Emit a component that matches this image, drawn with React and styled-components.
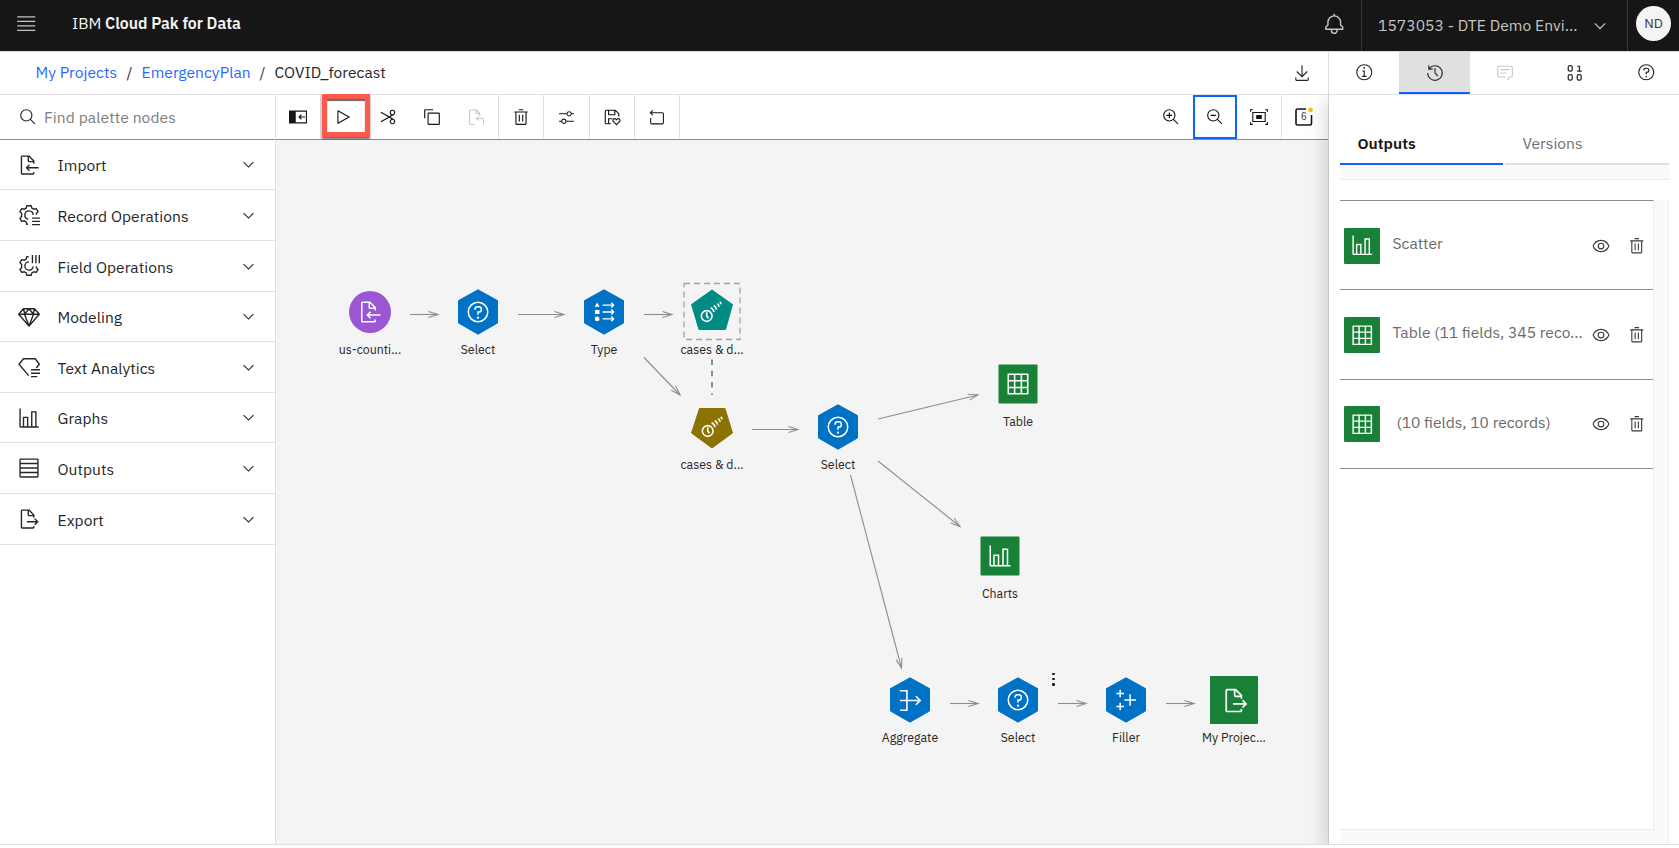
import React from "react";
import styled, { createGlobalStyle, css } from "styled-components";

const GlobalStyle = createGlobalStyle`
  *, *::before, *::after { box-sizing: border-box; }
  body {
    margin: 0;
    background: #fff;
    color: #262626;
    font-family: "IBM Plex Sans", Roboto, "Liberation Sans", sans-serif;
    font-size: 15.6px;
    overflow: hidden;
  }
`;

/* ---------- icons ---------- */

const Svg = styled.svg`
  display: block;
  flex: none;
  fill: currentColor;
  overflow: visible;
`;

const line = { fill: "none", stroke: "currentColor", strokeWidth: 2 };
const filePath =
  "M24 14V10a1 1 0 0 0-.29-.71l-7-7A1 1 0 0 0 16 2H6A2 2 0 0 0 4 4V28a2 2 0 0 0 2 2H22a2 2 0 0 0 2-2V26H22v2H6V4h8v6a2 2 0 0 0 2 2h6v2zm-8-4V4.41L21.59 10z";
const lensPath =
  "M21.45 20A10.86 10.86 0 0 0 24 13 11 11 0 1 0 13 24a10.86 10.86 0 0 0 7-2.55L27.59 29 29 27.59ZM13 22a9 9 0 1 1 9-9A9 9 0 0 1 13 22Z";
const ringPath =
  "M16 2A14 14 0 1 0 30 16 14 14 0 0 0 16 2Zm0 26A12 12 0 1 1 28 16 12 12 0 0 1 16 28Z";

const shapes = {
  menu: <path d="M2 5h28v2H2zM2 12h28v2H2zM2 19h28v2H2zM2 26h28v2H2z" />,
  bell: (
    <path d="M28.7 19.3 26 16.59V13a10 10 0 0 0-9-9.95V1H15V3.05A10 10 0 0 0 6 13v3.59L3.3 19.3A1 1 0 0 0 3 20v3a1 1 0 0 0 1 1h7v.78a5.15 5.15 0 0 0 4.5 5.2A5 5 0 0 0 21 25V24h7a1 1 0 0 0 1-1V20A1 1 0 0 0 28.7 19.3ZM19 25a3 3 0 0 1-6 0V24h6Zm8-3H5V20.41L7.7 17.7A1 1 0 0 0 8 17V13a8 8 0 0 1 16 0v4a1 1 0 0 0 .3.7L27 20.41Z" />
  ),
  chevron: <path d="M16 22 6 12 7.4 10.6 16 19.2 24.6 10.6 26 12z" />,
  download: (
    <path d="M26 24v4H6V24H4v4a2 2 0 0 0 2 2H26a2 2 0 0 0 2-2V24ZM26 14 24.59 12.59 17 20.17 17 2 15 2 15 20.17 7.41 12.59 6 14 16 24z" />
  ),
  search: <path d={lensPath} />,
  zoomIn: <path d={lensPath + "M18 12h-4V8h-2v4H8v2h4v4h2v-4h4z"} />,
  zoomOut: <path d={lensPath + "M8 12h10v2H8z"} />,
  info: (
    <path d={ringPath + "M17 22V13h-4v2h2v7h-3v2h8v-2zM16 7a1.5 1.5 0 1 0 1.5 1.5A1.5 1.5 0 0 0 16 7z"} />
  ),
  history: (
    <path d="M20.59 22 15 16.41V7h2v8.58L22 20.59zM16 2A13.94 13.94 0 0 0 6 6.23V2H4v8h8V8H7.08A12 12 0 1 1 4 16H2A14 14 0 1 0 16 2Z" />
  ),
  comment: (
    <g {...line}>
      <path d="M20 29l4-6h3a2 2 0 0 0 2-2V6a2 2 0 0 0-2-2H5a2 2 0 0 0-2 2v15a2 2 0 0 0 2 2h12" />
      <path d="M8 10h16M8 16h10" />
    </g>
  ),
  binary: (
    <g {...line} strokeWidth="2.2">
      <rect x="4" y="3" width="7" height="9.5" rx="2.5" />
      <rect x="4" y="19" width="7" height="9.5" rx="2.5" />
      <rect x="20" y="19" width="7" height="9.5" rx="2.5" />
      <path d="M20 4h4v8.5M19.5 12.5h8.5" />
    </g>
  ),
  help: (
    <>
      <path d={ringPath + "M17 8h-1.5A4.49 4.49 0 0 0 11 12.5V13h2v-.5A2.5 2.5 0 0 1 15.5 10H17a2.5 2.5 0 0 1 0 5H15v4.5h2V17a4.5 4.5 0 0 0 0-9Z"} />
      <circle cx="16" cy="23.5" r="1.5" />
    </>
  ),
  panel: (
    <>
      <path d="M0 4.5h32v23H0zM12 6.5v19h18v-19z" fillRule="evenodd" />
      <path d="M28.5 16H18M22 12l-4 4 4 4" {...line} />
    </>
  ),
  play: (
    <path d="M7 28a1 1 0 0 1-1-1V5a1 1 0 0 1 1.48-.88l20 11a1 1 0 0 1 0 1.75l-20 11A1 1 0 0 1 7 28ZM8 6.69V25.31L24.92 16Z" />
  ),
  cut: (
    <path d="M26.5 19.63 20.24 16l6.26-3.63a5 5 0 0 0-1.21-9.2A5.19 5.19 0 0 0 24 3a5 5 0 0 0-4.33 7.53 5 5 0 0 0 2.39 2.1l-3.82 2.21L4 6.6 3 8.34 16.24 16 3 23.68l1 1.74 14.24-8.26 3.82 2.21a5 5 0 0 0-2.39 2.1A5 5 0 0 0 24 29a5.19 5.19 0 0 0 1.29-.17 5 5 0 0 0 1.21-9.2ZM21.4 9.53a3 3 0 0 1 1.1-4.12 3 3 0 0 1 4.1 1.11 3 3 0 0 1-1.1 4.11A3 3 0 0 1 21.4 9.53Zm5.2 16a3 3 0 0 1-4.1 1.11 3 3 0 0 1-1.1-4.12 3 3 0 0 1 4.1-1.1A3 3 0 0 1 26.6 25.48Z" />
  ),
  copy: (
    <path d="M28 10V28H10V10H28m0-2H10a2 2 0 0 0-2 2V28a2 2 0 0 0 2 2H28a2 2 0 0 0 2-2V10a2 2 0 0 0-2-2ZM4 18H2V4A2 2 0 0 1 4 2H18V4H4Z" />
  ),
  paste: (
    <g {...line}>
      <path d="M12 29H5a2 2 0 0 1-2-2V4a2 2 0 0 1 2-2h11l6 6v5" />
      <path d="M15 2v7h7M20 14l-4 4 4 4M16 18h10a3 3 0 0 1 3 3v8" />
    </g>
  ),
  trash: (
    <path d="M12 12h2v12h-2zM18 12h2v12h-2zM4 6V8H6V28a2 2 0 0 0 2 2H24a2 2 0 0 0 2-2V8h2V6zM8 28V8H24V28zM12 2h8v2h-8z" />
  ),
  sliders: (
    <path d="M30 8h-4.1c-.5-2.3-2.5-4-4.9-4s-4.4 1.7-4.9 4H2v2h14.1c.5 2.3 2.5 4 4.9 4s4.4-1.7 4.9-4H30V8ZM21 12c-1.7 0-3-1.3-3-3s1.3-3 3-3 3 1.3 3 3S22.7 12 21 12ZM2 24h4.1c.5 2.3 2.5 4 4.9 4s4.4-1.7 4.9-4H30v-2H15.9c-.5-2.3-2.5-4-4.9-4s-4.4 1.7-4.9 4H2v2Zm9-4c1.7 0 3 1.3 3 3s-1.3 3-3 3-3-1.3-3-3 1.3-3 3-3Z" />
  ),
  save: (
    <g {...line}>
      <path d="M14 28H6a2 2 0 0 1-2-2V6a2 2 0 0 1 2-2h16l6 6v5M10 4v8h11V4M10 28v-9h7" />
      <path d="M24 29.5l-5.7-5.7a3 3 0 0 1 4.2-4.2l1.5 1.4 1.5-1.4a3 3 0 0 1 4.2 4.2z" />
    </g>
  ),
  undo: <path d="M9 2.5 4.5 7l4.5 4.5M4.5 7H27a2 2 0 0 1 2 2V26a2 2 0 0 1-2 2H7a2 2 0 0 1-2-2v-9" {...line} />,
  fit: (
    <>
      <path d="M5 8h22v16H5z" {...line} />
      <path d="M11 12.5h10v7H11z" />
      <path d="M1 6.5V3h4M27 3h4v3.5M31 25.5V29h-4M5 29H1v-3.5" {...line} />
    </>
  ),
  eye: (
    <path d="M30.94 15.66A16.69 16.69 0 0 0 16 5 16.69 16.69 0 0 0 1.06 15.66a1 1 0 0 0 0 .68A16.69 16.69 0 0 0 16 27 16.69 16.69 0 0 0 30.94 16.34a1 1 0 0 0 0-.68ZM16 25c-5.3 0-10.9-3.93-12.93-9C5.1 10.93 10.7 7 16 7s10.9 3.93 12.93 9C26.9 21.07 21.3 25 16 25ZM16 10a6 6 0 1 0 6 6 6 6 0 0 0-6-6Zm0 10a4 4 0 1 1 4-4 4 4 0 0 1-4 4Z" />
  ),
  import: <path d={filePath + "M30 19H14.83l2.58-2.59L16 15l-5 5 5 5 1.41-1.41L14.83 21H30z"} />,
  export: <path d={filePath + "M13 21h13.17l-2.58 2.59L25 25l5-5-5-5-1.41 1.41L26.17 19H13z"} />,
  record: (
    <g {...line} strokeLinejoin="round">
      <path d="M14.5 29.5h-1.7l-1-3.7-2.7-1.4-3.6 1-2.7-4.4 2.5-2.9v-4.2L2.8 11l2.7-4.4 3.6 1 2.7-1.5 1-3.6h6.4l1 3.6 2.7 1.5 3.6-1L29.2 11l-2.5 2.9v1.6" />
      <path d="M15 22a6 6 0 1 1 7-6" />
      <path d="M20.5 20.5H32M20.5 25.3H32M20.5 30H32" />
    </g>
  ),
  field: (
    <g {...line} strokeLinejoin="round">
      <path d="M15.5 2.5h-2.7l-1 3.6-2.7 1.5-3.6-1L2.8 11l2.5 2.9v4.2L2.8 21l2.7 4.4 3.6-1 2.7 1.4 1 3.7h6.4l1-3.7 2.7-1.4 3.6 1 2.7-4.4-2.5-2.9v-1.6" />
      <path d="M16 10a6 6 0 1 0 6 6.5" />
      <path d="M21 0v12M26 0v12M31 0v12" />
    </g>
  ),
  diamond: (
    <path
      d="M8 4h16l7 8-15 17L1 12zM1 12h30M16 29 9.5 12 16 4l6.5 8zM8 4l2 8M24 4l-2 8"
      {...line}
      strokeLinejoin="round"
    />
  ),
  textDiamond: (
    <g {...line} strokeLinejoin="round">
      <path d="M15.5 28.5 1.5 12l6.5-8h17l6 8-4.5 5.5" />
      <path d="M19 20h13M19 25h13M19 30h9" />
    </g>
  ),
  bars: <path d="M27 28V6H19V28H15V14H7V28H4V2H2V28a2 2 0 0 0 2 2H30V28ZM13 28H9V16h4Zm12 0H21V8h4Z" />,
  rows: <path d="M4 3h24a1 1 0 0 1 1 1v24a1 1 0 0 1-1 1H4a1 1 0 0 1-1-1V4a1 1 0 0 1 1-1zM3 9.5h26M3 16h26M3 22.5h26" {...line} />,
  grid: <path d="M3 3h26v26H3zM3 11.5h26M3 20.5h26M11.5 3v26M20.5 3v26" {...line} strokeLinejoin="round" />,
  type: (
    <>
      <path d="M6 2l3.5 6.5h-7zM3 13h6.5v6H3z" />
      <circle cx="6" cy="26" r="3.5" />
      <path d="M14 6h16M26.5 2.5 30 6l-3.5 3.5M14 16h16M26.5 12.5 30 16l-3.5 3.5M14 26h16M26.5 22.5 30 26l-3.5 3.5" {...line} />
    </>
  ),
  forecast: (
    <g {...line} strokeWidth="2.3">
      <circle cx="8.3" cy="21.8" r="7.8" />
      <path d="M8.3 16.5v5.5l2.7 3.2" />
      <path d="M14 9.7q4.2 1.8 5 6.5M18.6 6.5q3.5 1.8 4 6M23.4 3.8q2.5 1.3 3 4.8M27.2 1.5q1.8 1 2 3.2" />
    </g>
  ),
  aggregate: <path d="M1.5 2.5H11v27H1.5M1.5 16h28M23.5 10l6 6-6 6" {...line} strokeWidth="2.2" />,
  filler: <path d="M7.5 1v11M2 6.5h11M7.5 20v11M2 25.5h11M22 7.5v17M13.5 16h17" {...line} strokeWidth="2.2" />,
};

const Icon = ({ name, size = 20 }) => (
  <Svg width={size} height={size} viewBox="0 0 32 32" aria-hidden="true">
    {shapes[name]}
  </Svg>
);

/* ---------- header ---------- */

const Page = styled.div`
  display: flex;
  flex-direction: column;
  width: 1679px;
  height: 848px;
  background: #fff;
`;

const Header = styled.header`
  display: flex;
  align-items: stretch;
  flex: none;
  height: 51px;
  background: #161616;
  color: #c6c6c6;
`;

const HeaderCell = styled.div`
  display: flex;
  align-items: center;
  width: ${(p) => p.$w}px;
  padding: ${(p) => p.$pad || "0"};
  justify-content: ${(p) => p.$justify || "flex-start"};
  ${(p) => p.$divided && css`border-left: 1px solid #393939;`}
`;

const Brand = styled.div`
  flex: 1;
  padding: 13px 0 0 20px;
  line-height: 20px;
  font-size: 15.75px;
  color: #f4f4f4;
  strong { font-weight: 600; }
`;

const Account = styled.span`
  flex: 1;
  padding-bottom: 1px;
  white-space: nowrap;
  letter-spacing: 0.06px;
`;

const Avatar = styled.div`
  display: flex;
  align-items: center;
  justify-content: center;
  width: 35px;
  height: 35px;
  padding-bottom: 1px;
  border-radius: 50%;
  background: #f4f4f4;
  color: #393939;
  font-size: 13.5px;
`;

/* ---------- body frame ---------- */

const Body = styled.div`
  display: flex;
  flex: none;
  height: 794px;
  border-top: 1px solid #dcdcdc;
  border-bottom: 1px solid #e0e0e4;
`;

const Main = styled.main`
  display: flex;
  flex-direction: column;
  width: 1328px;
`;

const Crumbs = styled.nav`
  display: flex;
  align-items: center;
  height: 43px;
  padding: 0 17px 0 35.5px;
  border-bottom: 1px solid #e0e0e0;
`;

const Crumb = styled.span`
  white-space: nowrap;
  width: ${(p) => p.$w}px;
  padding-bottom: 2px;
  letter-spacing: 0.04px;
  color: ${(p) => (p.$link ? "#1f6bff" : "#262626")};
`;

const Slash = styled.span`
  width: 24px;
  padding: 0 0 2px 9px;
  color: #393939;
`;

const Push = styled.div`
  margin-left: auto;
`;

const Work = styled.div`
  display: flex;
  flex: 1;
  min-height: 0;
`;

/* ---------- palette ---------- */

const Palette = styled.aside`
  width: 276px;
  border-right: 1px solid #e0e0e0;
`;

const SearchBox = styled.div`
  display: flex;
  align-items: center;
  gap: 7px;
  height: 45px;
  padding-left: 19px;
  border-bottom: 1px solid #8d8d8d;
  color: #262626;
  span {
    padding-bottom: 1px;
    color: #7c7c7c;
    letter-spacing: 0.1px;
  }
`;

const Category = styled.div`
  display: flex;
  align-items: center;
  height: ${(p) => p.$h}px;
  padding: 0 18px 0 18px;
  border-bottom: 1px solid #e0e0e0;
`;

const CategoryName = styled.span`
  flex: 1;
  padding: 1px 0 0 17.5px;
  letter-spacing: 0.04px;
`;

/* ---------- toolbar ---------- */

const Stage = styled.section`
  display: flex;
  flex-direction: column;
  flex: 1;
`;

const Toolbar = styled.div`
  display: flex;
  flex: none;
  height: 45px;
  border-bottom: 1px solid #8d8d8d;
`;

const Tool = styled.button`
  position: relative;
  display: flex;
  align-items: center;
  justify-content: center;
  width: ${(p) => p.$w || 45}px;
  height: 44px;
  padding: 0 ${(p) => p.$nudge || 0}px 0 0;
  border: 0;
  background: none;
  color: ${(p) => (p.$off ? "#c6c6c6" : "#161616")};
  ${(p) => p.$divider && css`border-right: 1px solid #e0e0e0;`}
  ${(p) => p.$focus && css`outline: 2px solid #0f62fe; outline-offset: -2px;`}
`;

const Callout = styled.span`
  position: absolute;
  left: 1px;
  top: -1px;
  width: 48px;
  height: 43px;
  border: 5px solid #ff5a4d;
  box-shadow: 0 2px 2px rgba(0, 0, 0, 0.6), inset 0 2px 1px rgba(0, 0, 0, 0.6);
`;

/* ---------- canvas ---------- */

const Canvas = styled.div`
  position: relative;
  flex: 1;
  background: #f4f4f4;
`;

const Links = styled.svg`
  position: absolute;
  left: 0;
  top: 0;
  fill: none;
  stroke: #8d8d8d;
  stroke-width: 1.1;
`;

const NodeBox = styled.div`
  position: absolute;
  left: ${(p) => p.$x - 276 - 50}px;
  top: ${(p) => p.$y - 140 - 28}px;
  width: 100px;
  text-align: center;
`;

const Glyph = styled.div`
  display: grid;
  place-items: center;
  height: 56px;
  color: #fff;
  > * { grid-area: 1 / 1; }
`;

const NodeIcon = styled.div`
  transform: translateX(${(p) => p.$dx || 0}px);
`;

const NodeName = styled.div`
  margin-top: 1px;
  line-height: 16px;
  font-size: 12.35px;
  white-space: nowrap;
`;

const More = styled.div`
  position: absolute;
  left: 776px;
  top: 532.5px;
  display: flex;
  flex-direction: column;
  gap: 2.7px;
  i { width: 2.6px; height: 2.6px; border-radius: 50%; background: #161616; }
`;

const outlines = {
  circle: <circle cx="28" cy="28" r="21" fill="#9b56d4" />,
  hexagon: <path d="M28 5.8 47.5 16.6V39L28 50.2 8.5 39V16.6z" fill="#0072c6" stroke="#0072c6" strokeLinejoin="round" />,
  pentagon: (
    <>
      <rect x="0" y="-0.5" width="56" height="56" fill="none" stroke="#a4a4a4" strokeWidth="1.3" strokeDasharray="6 4" />
      <path d="M28 6 48.5 20.5 41.5 45.5H15L7.5 20.5z" fill="#008c84" stroke="#008c84" strokeLinejoin="round" />
    </>
  ),
  nugget: <path d="M15.500 9.5H41L48.5 34 28 49 7.5 34z" fill="#8c7200" stroke="#8c7200" strokeLinejoin="round" />,
  square: <rect x="8.5" y="8.5" width="39" height="39" rx="1" fill="#198038" />,
  bigSquare: <rect x="4" y="4" width="48" height="48" rx="1" fill="#198038" />,
};

const nodes = [
  { x: 370, y: 312, shape: "circle", icon: "import", name: "us-counti..." },
  { x: 478, y: 312, shape: "hexagon", icon: "help", name: "Select" },
  { x: 604, y: 312, shape: "hexagon", icon: "type", name: "Type", size: 22 },
  { x: 712, y: 312, shape: "pentagon", icon: "forecast", name: "cases & d...", size: 22 },
  { x: 712, y: 427, shape: "nugget", icon: "forecast", name: "cases & d...", size: 22, dx: 1 },
  { x: 838, y: 427, shape: "hexagon", icon: "help", name: "Select" },
  { x: 1018, y: 383.5, shape: "square", icon: "grid", name: "Table" },
  { x: 1000, y: 556, shape: "square", icon: "bars", name: "Charts" },
  { x: 910, y: 700, shape: "hexagon", icon: "aggregate", name: "Aggregate", size: 23 },
  { x: 1018, y: 700, shape: "hexagon", icon: "help", name: "Select" },
  { x: 1126, y: 700, shape: "hexagon", icon: "filler", name: "Filler", size: 22 },
  { x: 1234, y: 700, shape: "bigSquare", icon: "export", name: "My Projec...", size: 27, dx: 1 },
];

const links = [
  [410, 314.5, 438, 314.5],
  [518, 314.5, 564, 314.5],
  [644, 314.5, 672, 314.5],
  [644, 357.5, 680, 395],
  [752, 429.5, 798, 429.5],
  [878, 419, 978, 395],
  [878, 461, 960, 526.5],
  [850.5, 475, 901.5, 668],
  [950, 703.5, 978, 703.5],
  [1058, 703.5, 1086, 703.5],
  [1166, 703.5, 1194, 703.5],
];

/* ---------- right panel ---------- */

const Side = styled.aside`
  position: relative;
  display: flex;
  flex-direction: column;
  width: 351px;
  background: #fff;
  border-left: 1px solid #dcdcdc;
`;

const SideTabs = styled.div`
  display: flex;
  flex: none;
  height: 43px;
  overflow: hidden;
  border-bottom: 1px solid #e0e0e0;
`;

const SideTab = styled.div`
  display: flex;
  align-items: center;
  justify-content: center;
  flex: 0 0 70.4px;
  padding-bottom: 1px;
  color: ${(p) => (p.$off ? "#c6c6c6" : "#262626")};
  ${(p) => p.$on && css`background: #e0e0e0; box-shadow: inset 0 -2px #0f62fe;`}
`;

const SideBody = styled.div`
  display: flex;
  flex-direction: column;
  flex: 1;
  padding: 32px 10px 0 11px;
  box-shadow: -5px 6px 16px rgba(0, 0, 0, 0.14);
  clip-path: inset(0 0 0 -30px);
`;

const Tabs = styled.div`
  display: flex;
  gap: 2px;
`;

const Tab = styled.div`
  width: ${(p) => (p.$on ? 163 : 164)}px;
  height: 38px;
  padding: 6px 0 0 17.5px;
  line-height: 20px;
  font-weight: ${(p) => (p.$on ? 600 : 400)};
  color: ${(p) => (p.$on ? "#161616" : "#6f6f6f")};
  border-bottom: 2px solid ${(p) => (p.$on ? "#0f62fe" : "#e0e0e0")};
`;

const Strip = styled.div`
  height: 15px;
  background: #fafafa;
  border-bottom: 1px solid #ebebeb;
`;

const OutputPane = styled.div`
  flex: 1;
  margin-top: 20px;
  padding: 0 14px 14px 0;
  background: #fafafa;
  border-right: 1px solid #efefef;
`;

const OutputList = styled.div`
  height: 100%;
  background: #fff;
  border-right: 1px solid #ebebeb;
  border-bottom: 1px solid #ebebeb;
  border-top: 1px solid #8d8d8d;
`;

const Output = styled.div`
  display: flex;
  align-items: center;
  height: 89.3px;
  padding: 1px 8px 0 4px;
  border-bottom: 1px solid #8d8d8d;
  color: #393939;
`;

const OutputIcon = styled.div`
  display: flex;
  align-items: center;
  justify-content: center;
  flex: none;
  width: 36px;
  height: 36px;
  border-radius: 1px;
  background: #198038;
  color: #fff;
`;

const OutputName = styled.span`
  flex: 1;
  padding: 0 0 5px ${(p) => p.$pad || 12.5}px;
  white-space: nowrap;
  color: #6a6a6a;
`;

const OutputActions = styled.div`
  display: flex;
  flex: none;
  align-items: center;
  gap: 17.5px;
`;

const categories = [
  ["import", "Import", 50],
  ["record", "Record Operations", 51],
  ["field", "Field Operations", 51],
  ["diamond", "Modeling", 50],
  ["textDiamond", "Text Analytics", 51],
  ["bars", "Graphs", 50],
  ["rows", "Outputs", 51],
  ["export", "Export", 51],
];

const outputs = [
  { icon: "bars", name: "Scatter" },
  { icon: "grid", name: "Table (11 fields, 345 reco..." },
  { icon: "grid", name: "(10 fields, 10 records)", pad: 16.5 },
];

export default function App() {
  return (
    <>
      <GlobalStyle />
      <Page>
        <Header>
          <HeaderCell $w={52} $pad="0 0 4px 16px">
            <Icon name="menu" size={20.5} />
          </HeaderCell>
          <Brand>
            IBM <strong>Cloud Pak for Data</strong>
          </Brand>
          <HeaderCell $w={53} $pad="0 0 2px" $justify="center">
            <Icon name="bell" size={22.5} />
          </HeaderCell>
          <HeaderCell $w={266} $pad="0 18px 0 16px" $divided>
            <Account>1573053 - DTE Demo Envi...</Account>
            <Icon name="chevron" size={18} />
          </HeaderCell>
          <HeaderCell $w={52} $pad="0 0 4px" $justify="center" $divided>
            <Avatar>ND</Avatar>
          </HeaderCell>
        </Header>

        <Body>
          <Main>
            <Crumbs>
              <Crumb $link $w={82}>My Projects</Crumb>
              <Slash>/</Slash>
              <Crumb $link $w={109}>EmergencyPlan</Crumb>
              <Slash>/</Slash>
              <Crumb>COVID_forecast</Crumb>
              <Push>
                <Icon name="download" size={18} />
              </Push>
            </Crumbs>
            <Work>
              <Palette>
                <SearchBox>
                  <Icon name="search" size={18} />
                  <span>Find palette nodes</span>
                </SearchBox>
                {categories.map(([icon, name, height]) => (
                  <Category key={name} $h={height}>
                    <Icon name={icon} size={22} />
                    <CategoryName>{name}</CategoryName>
                    <Icon name="chevron" size={17} />
                  </Category>
                ))}
              </Palette>
              <Stage>
                <Toolbar>
                  <Tool $divider><Icon name="panel" size={18} /></Tool>
                  <Tool $nudge={1.5}>
                    <Icon name="play" size={18} />
                    <Callout />
                  </Tool>
                  <Tool $w={44}><Icon name="cut" size={18} /></Tool>
                  <Tool $w={44}><Icon name="copy" size={18} /></Tool>
                  <Tool $off $divider><Icon name="paste" size={17} /></Tool>
                  <Tool $divider><Icon name="trash" size={18} /></Tool>
                  <Tool $w={46} $divider><Icon name="sliders" size={17} /></Tool>
                  <Tool $divider><Icon name="save" size={18} /></Tool>
                  <Tool $divider $nudge={1}><Icon name="undo" size={17} /></Tool>
                  <Push />
                  <Tool $w={45}><Icon name="zoomIn" size={18} /></Tool>
                  <Tool $w={44} $focus><Icon name="zoomOut" size={18} /></Tool>
                  <Tool $w={45} $divider><Icon name="fit" size={18} /></Tool>
                  <Tool $w={46} $nudge={2}>
                    <Svg width="18" height="18" viewBox="0 0 18 18">
                      <path d="M11 1H2.5A1.5 1.5 0 0 0 1 2.5v13A1.5 1.5 0 0 0 2.5 17h12.5a1.5 1.5 0 0 0 1.5-1.5V7" fill="none" stroke="#161616" strokeWidth="1.6" />
                      <circle cx="15.5" cy="2" r="2.4" fill="#f1c21b" />
                      <text x="5.9" y="12" fontSize="10" fill="#393939">6</text>
                    </Svg>
                  </Tool>
                </Toolbar>
                <Canvas>
                  <Links width="1052" height="704" viewBox="276 140 1052 704">
                    <defs>
                      <marker id="tip" markerWidth="12" markerHeight="8" refX="10" refY="4" orient="auto" markerUnits="userSpaceOnUse">
                        <path d="M0.5 1 10 4 0.5 7" />
                      </marker>
                    </defs>
                    {links.map(([x1, y1, x2, y2]) => (
                      <line key={`${x1}-${y1}`} x1={x1} y1={y1} x2={x2} y2={y2} markerEnd="url(#tip)" />
                    ))}
                    <path d="M712 359.5V395" strokeWidth="2" strokeDasharray="5.5 5.8" />
                  </Links>
                  {nodes.map((n) => (
                    <NodeBox key={`${n.x}-${n.y}`} $x={n.x} $y={n.y}>
                      <Glyph>
                        <Svg width="56" height="56" viewBox="0 0 56 56">{outlines[n.shape]}</Svg>
                        <NodeIcon $dx={n.dx}>
                          <Icon name={n.icon} size={n.size || 24} />
                        </NodeIcon>
                      </Glyph>
                      <NodeName>{n.name}</NodeName>
                    </NodeBox>
                  ))}
                  <More><i /><i /><i /></More>
                </Canvas>
              </Stage>
            </Work>
          </Main>

          <Side>
            <SideTabs>
              <SideTab><Icon name="info" size={18.5} /></SideTab>
              <SideTab $on><Icon name="history" size={18} /></SideTab>
              <SideTab $off><Icon name="comment" size={18} /></SideTab>
              <SideTab><Icon name="binary" size={18} /></SideTab>
              <SideTab><Icon name="help" size={18.5} /></SideTab>
            </SideTabs>
            <SideBody>
              <Tabs>
                <Tab $on>Outputs</Tab>
                <Tab>Versions</Tab>
              </Tabs>
              <Strip />
              <OutputPane>
                <OutputList>
                  {outputs.map((o) => (
                    <Output key={o.name}>
                      <OutputIcon><Icon name={o.icon} size={22.5} /></OutputIcon>
                      <OutputName $pad={o.pad}>{o.name}</OutputName>
                      <OutputActions>
                        <Icon name="eye" size={18} />
                        <Icon name="trash" size={17.5} />
                      </OutputActions>
                    </Output>
                  ))}
                </OutputList>
              </OutputPane>
            </SideBody>
          </Side>
        </Body>
      </Page>
    </>
  );
}
